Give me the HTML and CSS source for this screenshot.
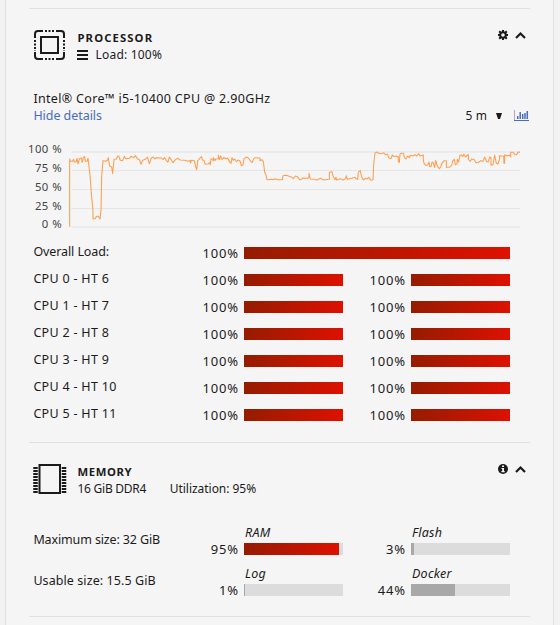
FILE: index.html
```html
<!DOCTYPE html>
<html lang="en">
<head>
<meta charset="utf-8">
<title>System</title>
<link rel="stylesheet" href="styles.css">
</head>
<body>
<main class="card">
  <section class="panel processor">
    <header class="head">
      <svg class="chip" width="34" height="32" viewBox="0 0 34 32" fill="none" stroke="#1c1b1b">
        <rect x="8" y="8" width="17" height="16" stroke-width="2"/>
        <path d="M2 9V5Q2 2 5 2H10M23 2H28Q31 2 31 5V9M31 23V27Q31 30 28 30H23M10 30H5Q2 30 2 27V23" stroke-width="2"/>
        <path d="M12 2H22M12 30H22" stroke-width="2" stroke-dasharray="2 1.500"/>
        <path d="M2 11V22M31 11V22" stroke-width="2" stroke-dasharray="2 1.500"/>
      </svg>
      <div class="titles">
        <h2>PROCESSOR</h2>
        <p class="sub"><svg class="menu" width="11" height="10" viewBox="0 0 11 10" shape-rendering="crispEdges"><path d="M0 1H11M0 5H11M0 9H11" stroke="#1c1b1b" stroke-width="2"/></svg><span class="load">Load: 100%</span></p>
      </div>
      <div class="tools">
        <svg width="10" height="10" viewBox="0 0 10 10"><circle cx="5" cy="5" r="2.800" fill="none" stroke="#1c1b1b" stroke-width="2"/><path d="M5 0V2M5 8V10M0 5H2M8 5H10M1.200 1.200L2.700 2.700M7.300 7.300L8.800 8.800M8.800 1.200L7.300 2.700M2.700 7.300L1.200 8.800" stroke="#1c1b1b" stroke-width="2"/></svg>
        <svg width="11" height="10" viewBox="0 0 11 10"><path d="M1 8L5.500 3.500L10 8" fill="none" stroke="#1c1b1b" stroke-width="2.200"/></svg>
      </div>
    </header>
    <p class="model">Intel® Core™ i5-10400 CPU @ 2.90GHz</p>
    <div class="controls">
      <a class="details">Hide details</a>
      <span class="range">5 m</span>
      <svg class="caret" width="6" height="6" viewBox="0 0 6 6"><path d="M0 0H6L4 6H2Z" fill="#1c1b1b"/></svg>
      <svg class="bars" width="15" height="12" viewBox="0 0 15 12"><path d="M.5 0V11" fill="none" stroke="#b9a0d0"/><path d="M0 10.500H15" stroke="#486dba"/><path d="M3.700 9V6M6.200 9V2M8.700 9V4M11 9V3M13.300 9V1" stroke="#486dba" stroke-width="1.500"/></svg>
    </div>
    <svg class="chart" width="510" height="95" viewBox="0 0 1530 285">
      <g stroke="#e5e5e5" stroke-width="3"><path d="M154 91.500H1500M154 148.500H1500M154 205.500H1500"/><path d="M154 36H1500M154 261H1500" stroke="#ebebeb" stroke-width="6"/></g>
      <g class="axis"><text x="126" y="39">100 %</text><text x="126" y="96">75 %</text><text x="126" y="153">50 %</text><text x="126" y="210">25 %</text><text x="126" y="264">0 %</text></g>
      <path class="trace" d="M149 260V57L152 64H157L161 58L163 66H168L171 55L174 72L178 56L184 54L187 67L190 53L194 49L196 64H201L204 55L207 79L210 105L214 160L219 212V236H225L230 229H235L240 237L243 210L245 110L249 62L256 64L262 61L265 53L269 78L275 81L278 101L282 58L289 57L293 48L297 49L301 61L308 62L313 49L317 56L329 55L333 49L341 53L346 47L352 56L359 60L363 73L368 61L376 58L382 51L388 71L394 54L400 51L404 57L408 53L424 54L429 58L434 53L440 63L444 66L448 51L453 58L459 68L466 59L474 55L480 60L494 61L504 64L511 61V69L515 61L523 62L526 76L530 89L533 63L539 55L545 50L547 60L552 61L556 73L564 72L569 68L571 74L573 56L580 62V53L585 62L587 57L595 56V45L598 59L602 48L606 59L612 52L618 57L623 54L629 66L633 70L636 53L640 61L644 57L650 65L654 60L660 63L664 77L669 75L672 56L679 51L685 54L693 65L697 67L701 56L706 53L720 54V62L726 59L730 64L734 97L738 104L741 119L755 118L760 119L766 116L774 119H787L789 107L798 106L812 110L820 116L826 108L832 110L839 119L844 118L849 114L864 115L867 110V100L871 117L882 118L891 120L901 115L911 120L928 118V97L936 95L939 108L945 119L948 112L950 120L962 116L970 120L977 115L979 107L982 118L995 115L1005 112L1008 116L1013 118L1015 96L1021 92L1024 108L1030 120L1036 115L1041 117L1046 112L1053 121L1059 119L1061 76L1065 39L1071 36L1076 40L1086 41L1091 38L1096 44L1102 42L1106 53L1113 56L1117 45L1122 50L1129 48L1132 51L1135 50V65L1138 67L1140 42L1145 40H1151L1153 53L1158 57L1163 48L1168 53L1171 46L1179 48L1185 44L1190 48L1196 41L1200 48L1210 45V62L1213 72L1219 77L1224 74L1227 66L1229 80H1233L1236 67L1239 67L1244 82L1247 61L1252 78L1258 86L1262 81L1266 69L1273 62H1279V82H1288L1295 76L1298 63L1303 58L1306 74L1311 72L1312 58L1316 66L1320 46L1325 45L1328 50L1332 43L1337 51L1345 43V58L1351 64L1355 57L1363 59L1368 68L1376 67L1382 62L1389 64L1394 51L1400 65H1405L1409 51L1413 54V75H1419L1424 45L1429 70L1434 72L1439 56L1438 47L1451 49L1452 70H1454V44L1462 48L1468 45L1472 51V37H1479L1485 44H1490L1494 36L1500 37"/>
    </svg>
    <div class="rows">
      <div class="row wide"><span>Overall Load:</span><b>100%</b><i class="bar hot"></i></div>
      <div class="row"><span>CPU 0 - HT 6</span><b>100%</b><i class="bar hot"></i><b>100%</b><i class="bar hot"></i></div>
      <div class="row"><span>CPU 1 - HT 7</span><b>100%</b><i class="bar hot"></i><b>100%</b><i class="bar hot"></i></div>
      <div class="row"><span>CPU 2 - HT 8</span><b>100%</b><i class="bar hot"></i><b>100%</b><i class="bar hot"></i></div>
      <div class="row"><span>CPU 3 - HT 9</span><b>100%</b><i class="bar hot"></i><b>100%</b><i class="bar hot"></i></div>
      <div class="row"><span>CPU 4 - HT 10</span><b>100%</b><i class="bar hot"></i><b>100%</b><i class="bar hot"></i></div>
      <div class="row"><span>CPU 5 - HT 11</span><b>100%</b><i class="bar hot"></i><b>100%</b><i class="bar hot"></i></div>
    </div>
  </section>
  <section class="panel memory">
    <header class="head">
      <svg class="chip" width="34" height="32" viewBox="0 0 34 32" fill="none" stroke="#1c1b1b">
        <rect x="6.500" y="2" width="20.500" height="28" stroke-width="2"/>
        <path d="M2.500 4V30M31 4V30" stroke-width="4.500" stroke-dasharray="2 1"/>
      </svg>
      <div class="titles">
        <h2 class="memtitle">MEMORY</h2>
        <p class="sub"><span class="ddr">16 GiB DDR4</span><span class="util">Utilization: 95%</span></p>
      </div>
      <div class="tools">
        <svg width="10" height="10" viewBox="0 0 10 10"><circle cx="5" cy="5" r="5" fill="#1c1b1b"/><path d="M4 1.500H6V3H4ZM3.500 4H6V7H6.700V8.200H3.400V7H4.200V5H3.500Z" fill="#f5f5f5"/></svg>
        <svg width="11" height="10" viewBox="0 0 11 10"><path d="M1 8L5.500 3.500L10 8" fill="none" stroke="#1c1b1b" stroke-width="2.200"/></svg>
      </div>
    </header>
    <div class="memrow">
      <span class="max">Maximum size: 32 GiB</span><b>95%</b>
      <div><em>RAM</em><i class="bar"><i class="fill hot" style="width:96%"></i></i></div>
      <b>3%</b>
      <div><em>Flash</em><i class="bar"><i class="fill" style="width:3%"></i></i></div>
    </div>
    <div class="memrow">
      <span class="usable">Usable size: 15.5 GiB</span><b>1%</b>
      <div><em>Log</em><i class="bar"><i class="fill" style="width:1%"></i></i></div>
      <b>44%</b>
      <div><em>Docker</em><i class="bar"><i class="fill" style="width:44%"></i></i></div>
    </div>
  </section>
</main>
</body>
</html>
```
FILE: styles.css
```css
* { box-sizing: border-box; }
body {
  margin: 0;
  height: 625px;
  overflow: hidden;
  background: #f2f2f2;
  color: #1c1b1b;
  font: 12.5px/17px "Noto Sans", "Open Sans", sans-serif;
}
h2, p { margin: 0; }
svg { display: block; flex: none; }
.card {
  width: 549px;
  height: 625px;
  margin-left: 5px;
  padding: 8px 22px 0 23px;
  border: solid #e0e0e0;
  border-width: 0 1px;
  background: #f5f5f5;
}
.panel {
  width: 501px;
  border-top: 1px solid #e0e0e0;
  padding-left: 4px;
}
.processor { height: 434px; }
.memory { height: 175px; border-bottom: 1px solid #e0e0e0; }
.head { display: flex; height: 81px; padding-top: 20px; }
.memory .head { height: 80px; }
.titles { margin-left: 10px; }
h2 { padding-left: .5px; font-size: 11.3px; line-height: 17px; letter-spacing: 1.1px; font-weight: 700; }
.memtitle { letter-spacing: .6px; }
.sub { display: flex; align-items: center; white-space: nowrap; font-size: 12px; }
.load { margin-left: 7.5px; letter-spacing: .2px; }
.ddr { padding-left: .5px; letter-spacing: -.25px; }
.util { margin-left: 23.5px; letter-spacing: -.03px; }
.tools { display: flex; gap: 7px; margin: 1px 4px 0 auto; height: 10px; }
.model, .details, .row > span, .memrow > span { padding-left: .4px; }
.model { height: 17px; letter-spacing: .33px; white-space: nowrap; }
.controls { display: flex; height: 33px; }
.details { color: #486dba; margin-right: auto; letter-spacing: -.05px; }
.range { font-size: 12px; letter-spacing: .1px; }
.caret { margin: 6px 12px 0 9px; }
.bars { margin-right: 1px; margin-top: 3px; }
.chart { margin-left: -13px; }
.axis { font-size: 34px; letter-spacing: 1.3px; text-anchor: end; fill: #444; }
.trace { fill: none; stroke: #ff9e4f; stroke-width: 3.2; stroke-linejoin: round; }
.rows { margin-top: 5px; }
.row, .memrow {
  display: grid;
  grid-template-columns: 146px 65px 99px 68px 99px;
  height: 27px;
  white-space: nowrap;
}
.row.wide { grid-template-columns: 146px 65px 266px; }
.row > span { padding-top: 3px; letter-spacing: .3px; }
.row.wide > span { letter-spacing: -.1px; }
b { font-weight: 400; font-size: 13px; letter-spacing: .8px; text-align: right; padding: 5px 5.2px 0 0; }
.bar { display: block; height: 12px; background: #dcdcdc; }
.row .bar { margin-top: 7px; }
.fill { display: block; height: 12px; background: #a8a8a8; }
.hot { background: linear-gradient(100deg, #941c00, #de1100); }
.memrow { height: 41px; }
.memrow > span { padding-top: 8px; }
.max { letter-spacing: -.13px; }
.usable { letter-spacing: .08px; }
.memrow > b { padding-top: 18px; }
.memrow em { display: block; height: 20px; padding: 1px 0 0 1px; letter-spacing: .25px; }
```
